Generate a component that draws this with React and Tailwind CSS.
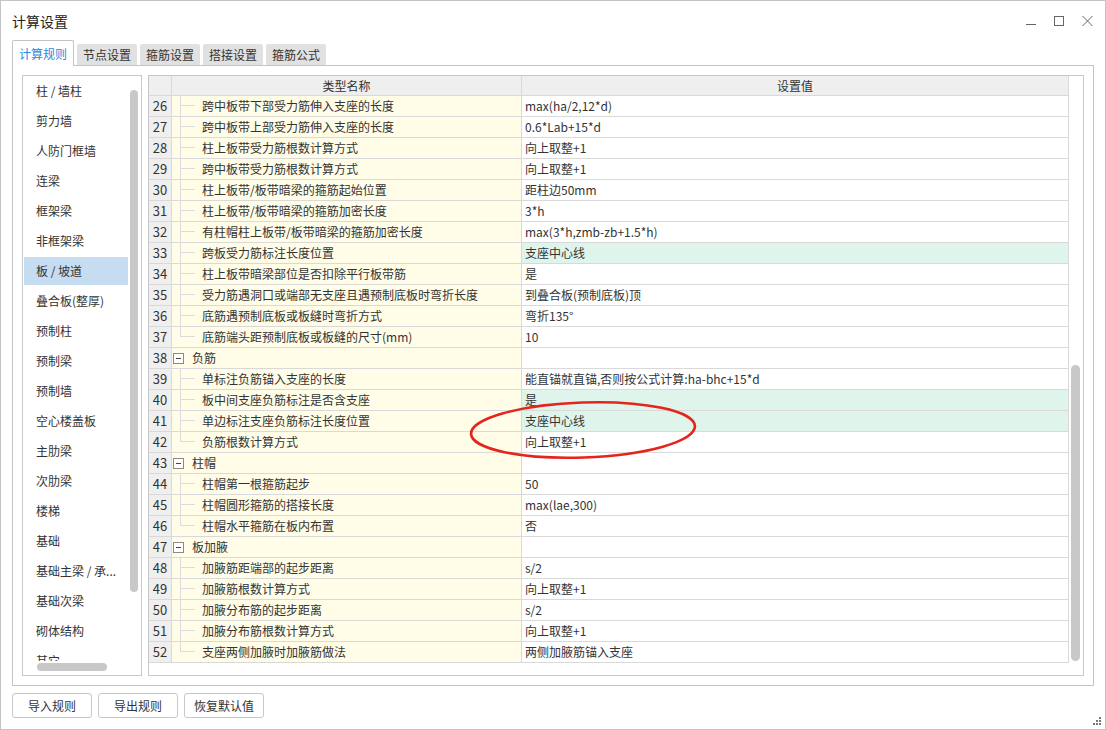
import React from "react";

const tabs = ["计算规则", "节点设置", "箍筋设置", "搭接设置", "箍筋公式"];

const listItems = [
  "柱 / 墙柱",
  "剪力墙",
  "人防门框墙",
  "连梁",
  "框架梁",
  "非框架梁",
  "板 / 坡道",
  "叠合板(整厚)",
  "预制柱",
  "预制梁",
  "预制墙",
  "空心楼盖板",
  "主肋梁",
  "次肋梁",
  "楼梯",
  "基础",
  "基础主梁 / 承...",
  "基础次梁",
  "砌体结构",
  "其它",
];

// type: c = child row, g = group row
const rows = [
  [26, "c", "跨中板带下部受力筋伸入支座的长度", "max(ha/2,12*d)"],
  [27, "c", "跨中板带上部受力筋伸入支座的长度", "0.6*Lab+15*d"],
  [28, "c", "柱上板带受力筋根数计算方式", "向上取整+1"],
  [29, "c", "跨中板带受力筋根数计算方式", "向上取整+1"],
  [30, "c", "柱上板带/板带暗梁的箍筋起始位置", "距柱边50mm"],
  [31, "c", "柱上板带/板带暗梁的箍筋加密长度", "3*h"],
  [32, "c", "有柱帽柱上板带/板带暗梁的箍筋加密长度", "max(3*h,zmb-zb+1.5*h)"],
  [33, "c", "跨板受力筋标注长度位置", "支座中心线", true],
  [34, "c", "柱上板带暗梁部位是否扣除平行板带筋", "是"],
  [35, "c", "受力筋遇洞口或端部无支座且遇预制底板时弯折长度", "到叠合板(预制底板)顶"],
  [36, "c", "底筋遇预制底板或板缝时弯折方式", "弯折135°"],
  [37, "l", "底筋端头距预制底板或板缝的尺寸(mm)", "10"],
  [38, "g", "负筋", ""],
  [39, "c", "单标注负筋锚入支座的长度", "能直锚就直锚,否则按公式计算:ha-bhc+15*d"],
  [40, "c", "板中间支座负筋标注是否含支座", "是", true],
  [41, "c", "单边标注支座负筋标注长度位置", "支座中心线", true],
  [42, "l", "负筋根数计算方式", "向上取整+1"],
  [43, "g", "柱帽", ""],
  [44, "c", "柱帽第一根箍筋起步", "50"],
  [45, "c", "柱帽圆形箍筋的搭接长度", "max(lae,300)"],
  [46, "l", "柱帽水平箍筋在板内布置", "否"],
  [47, "g", "板加腋", ""],
  [48, "c", "加腋筋距端部的起步距离", "s/2"],
  [49, "c", "加腋筋根数计算方式", "向上取整+1"],
  [50, "c", "加腋分布筋的起步距离", "s/2"],
  [51, "c", "加腋分布筋根数计算方式", "向上取整+1"],
  [52, "l", "支座两侧加腋时加腋筋做法", "两侧加腋筋锚入支座"],
];

function TreeGutter({ last }) {
  return (
    <div className="ml-[8px] w-[15px] h-[20px] flex flex-col shrink-0">
      <div className="h-[10px] border-l border-b border-[#dcdcdc]"></div>
      {!last && <div className="h-[10px] border-l border-[#dcdcdc]"></div>}
    </div>
  );
}

function Row({ r }) {
  const [num, type, name, value, green] = r;
  return (
    <div className="flex h-[21px] border-b border-[#d9d9d9]">
      <div className="w-[23px] shrink-0 bg-[#efefef] border-r border-[#d9d9d9] flex items-center justify-center text-[13px] text-[#333]">
        {num}
      </div>
      <div className="w-[350px] shrink-0 bg-[#fffce8] border-r border-[#d9d9d9] flex items-center">
        {type === "g" ? (
          <>
            <div className="ml-[1px] w-[11px] h-[11px] border border-[#8a8a8a] bg-white flex items-center justify-center">
              <div className="w-[5px] h-[1px] bg-[#444]"></div>
            </div>
            <span className="ml-[8px]">{name}</span>
          </>
        ) : (
          <>
            <TreeGutter last={type === "l"} />
            <span className="ml-[7px] whitespace-nowrap">{name}</span>
          </>
        )}
      </div>
      <div
        className={
          "w-[547px] shrink-0 border-r border-[#d9d9d9] flex items-center pl-[3px] whitespace-nowrap " +
          (green ? "bg-[#dff5ec]" : "bg-white")
        }
      >
        {value}
      </div>
    </div>
  );
}

function App() {
  return (
    <div className="relative w-[1106px] h-[730px] bg-white border border-[#c4c4c4] flex flex-col text-[12px] leading-[16px] text-[#333] font-['Noto_Sans_CJK_SC','Noto_Sans',sans-serif]">
      {/* title bar */}
      <div className="h-[39px] flex items-center justify-between pl-[11px] pr-[12px]">
        <span className="text-[14px] text-[#222]">计算设置</span>
        <div className="flex items-center gap-[18px] text-[#666]">
          <svg width="10" height="12" viewBox="0 0 10 12">
            <line x1="0" y1="9.5" x2="10" y2="9.5" stroke="#666" strokeWidth="1" />
          </svg>
          <svg width="10" height="12" viewBox="0 0 10 12">
            <rect x="0.5" y="1.5" width="9" height="9" fill="none" stroke="#666" strokeWidth="1" />
          </svg>
          <svg width="11" height="12" viewBox="0 0 11 12">
            <path d="M0.5 1 L10.5 11 M10.5 1 L0.5 11" stroke="#666" strokeWidth="1" />
          </svg>
        </div>
      </div>

      {/* tabs */}
      <div className="flex items-end gap-[3px] pl-[11px] h-[26px] relative z-10 mb-[-1px]">
        {tabs.map((t, i) =>
          i === 0 ? (
            <div
              key={t}
              className="w-[62px] h-[26px] bg-white border border-b-0 border-[#c4c4c4] rounded-t-[2px] flex items-center justify-center text-[#2a88de]"
            >
              {t}
            </div>
          ) : (
            <div
              key={t}
              className="w-[60px] h-[21px] bg-[#e1e1e1] rounded-t-[2px] flex items-center justify-center text-[#333] mb-[1px]"
            >
              {t}
            </div>
          )
        )}
      </div>

      {/* tab panel */}
      <div className="ml-[11px] w-[1082px] h-[621px] border border-[#c4c4c4] p-[9px] flex gap-[6px]">
        {/* left list */}
        <div className="w-[120px] h-[601px] border border-[#c8c8c8] flex flex-col">
          <div className="h-[585px] flex overflow-hidden">
            <div className="w-[107px] pt-[1px] pl-[1px] flex flex-col gap-[2px]">
              {listItems.map((it) => (
                <div
                  key={it}
                  className={
                    "w-[104px] h-[28px] shrink-0 flex items-center pl-[12px] whitespace-nowrap " +
                    (it === "板 / 坡道" ? "bg-[#c5dcf1]" : "")
                  }
                >
                  {it}
                </div>
              ))}
            </div>
            <div className="w-[11px] pt-[14px]">
              <div className="w-[8px] h-[502px] rounded-full bg-[#c8c8c8]"></div>
            </div>
          </div>
          <div className="flex-1 pt-[2px] pl-[14px]">
            <div className="w-[70px] h-[8px] rounded-full bg-[#c8c8c8]"></div>
          </div>
        </div>

        {/* settings table */}
        <div className="w-[936px] h-[601px] border border-[#c8c8c8] flex">
          <div className="w-[920px] flex flex-col">
            <div className="flex h-[20px] bg-[#efefef] border-b border-[#d9d9d9]">
              <div className="w-[23px] border-r border-[#d9d9d9]"></div>
              <div className="w-[350px] border-r border-[#d9d9d9] flex items-center justify-center">类型名称</div>
              <div className="w-[547px] border-r border-[#d9d9d9] flex items-center justify-center">设置值</div>
            </div>
            {rows.map((r) => (
              <Row key={r[0]} r={r} />
            ))}
          </div>
          <div className="w-[14px] pl-[2px] pt-[289px]">
            <div className="w-[9px] h-[296px] rounded-full bg-[#c8c8c8]"></div>
          </div>
        </div>
      </div>

      {/* buttons */}
      <div className="flex gap-[6px] pl-[11px] mt-[7px]">
        {["导入规则", "导出规则", "恢复默认值"].map((b) => (
          <div
            key={b}
            className="w-[80px] h-[25px] border border-[#c8c8c8] rounded-[3px] bg-white flex items-center justify-center"
          >
            {b}
          </div>
        ))}
      </div>

      {/* red annotation ellipse */}
      <svg
        className="absolute left-[463px] top-[395px] pointer-events-none"
        width="240"
        height="68"
        viewBox="0 0 240 68"
      >
        <ellipse
          cx="119"
          cy="34"
          rx="112"
          ry="27.5"
          fill="none"
          stroke="#e5241b"
          strokeWidth="2.6"
          transform="rotate(-2 119 34)"
        />
      </svg>

      {/* resize grip */}
      <svg className="absolute right-[3px] bottom-[3px]" width="9" height="9" viewBox="0 0 9 9">
        <rect x="6" y="0" width="2" height="2" fill="#777" />
        <rect x="3" y="3" width="2" height="2" fill="#777" />
        <rect x="6" y="3" width="2" height="2" fill="#777" />
        <rect x="0" y="6" width="2" height="2" fill="#777" />
        <rect x="3" y="6" width="2" height="2" fill="#777" />
        <rect x="6" y="6" width="2" height="2" fill="#777" />
      </svg>
    </div>
  );
}

export default App;
